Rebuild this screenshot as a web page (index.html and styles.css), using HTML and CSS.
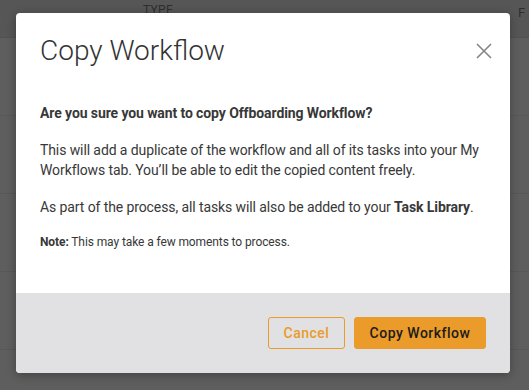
FILE: index.html
```html
<!DOCTYPE html>
<html>
<head>
<meta charset="utf-8">
<link rel="stylesheet" href="styles.css">
</head>
<body>
<div class="page">
  <div class="page-head">
    <span class="col-type">TYPE</span>
    <span class="col-f">F</span>
  </div>
  <div class="row"></div>
  <div class="row"></div>
  <div class="row"></div>
  <div class="row"></div>
  <div class="row last"><span class="row-text">Engagement</span></div>
</div>

<div class="modal">
  <div class="modal-head">
    <h1 class="modal-title">Copy Workflow</h1>
    <button class="close" aria-label="Close">
      <svg width="18" height="18" viewBox="0 0 18 18"><path d="M2 2 L16 16 M16 2 L2 16" stroke="#858585" stroke-width="1.6" fill="none"/></svg>
    </button>
  </div>
  <div class="modal-body">
    <p class="question">Are you sure you want to copy Offboarding Workflow?</p>
    <p class="text">This will add a duplicate of the workflow and all of its tasks into your My Workflows tab. You’ll be able to edit the copied content freely.</p>
    <p class="text">As part of the process, all tasks will also be added to your <b>Task Library</b>.</p>
    <p class="note"><b>Note:</b> This may take a few moments to process.</p>
  </div>
  <div class="modal-foot">
    <button class="btn btn-outline">Cancel</button>
    <button class="btn btn-primary">Copy Workflow</button>
  </div>
</div>
</body>
</html>
```
FILE: styles.css
```css
html, body {
  margin: 0;
  padding: 0;
}
body {
  width: 529px;
  height: 390px;
  overflow: hidden;
  background: #5e5e5e;
  font-family: Roboto, "Liberation Sans", sans-serif;
  position: relative;
}
.page {
  display: flex;
  flex-direction: column;
  height: 390px;
  overflow: hidden;
}
.page-head {
  height: 37px;
  flex: none;
  background: #565656;
  border-bottom: 1px solid #515151;
  position: relative;
  font-size: 12px;
  color: #2e2e2e;
}
.col-type {
  position: absolute;
  left: 143px;
  top: 3px;
  letter-spacing: 0.3px;
}
.col-f {
  position: absolute;
  left: 518px;
  top: 5px;
  font-size: 13px;
}
.row {
  height: 77px;
  flex: none;
  border-bottom: 1px solid #575757;
  position: relative;
}
.row.last {
  border-bottom: none;
  height: 38px;
  overflow: hidden;
}
.row-text {
  position: absolute;
  left: 157px;
  top: 35px;
  font-size: 15px;
  color: #262626;
}
.modal {
  position: absolute;
  left: 16px;
  top: 13px;
  width: 494px;
  height: 360px;
  background: #fff;
  border-radius: 4px;
  box-shadow: 0 2px 10px rgba(0,0,0,0.3);
  display: flex;
  flex-direction: column;
  overflow: hidden;
}
.modal-head {
  display: flex;
  align-items: center;
  justify-content: space-between;
  padding: 21px 17px 0 24px;
}
.modal-title {
  margin: 0;
  font-size: 28px;
  line-height: 34px;
  font-weight: 300;
  color: #333;
}
.close {
  border: none;
  background: none;
  padding: 0;
  width: 18px;
  height: 18px;
  display: flex;
}
.modal-body {
  flex: 1;
  padding: 35px 24px 0 24px;
  color: #383838;
  letter-spacing: -0.1px;
}
.modal-body p {
  margin: 0 0 17px 0;
}
.question {
  font-size: 14px;
  font-weight: 700;
  line-height: 20px;
}
.text {
  font-size: 14px;
  line-height: 20px;
}
.text b {
  font-weight: 700;
}
.note {
  font-size: 12px;
  line-height: 16px;
}
.modal-foot {
  height: 80px;
  flex: none;
  background: #e1e1e3;
  display: flex;
  align-items: center;
  justify-content: flex-end;
  gap: 9px;
  padding: 0 24px;
  box-sizing: border-box;
}
.btn {
  height: 32px;
  border-radius: 3px;
  font-family: Roboto, "Liberation Sans", sans-serif;
  font-size: 14px;
  font-weight: 500;
  letter-spacing: 0.5px;
  padding: 0;
  white-space: nowrap;
  cursor: pointer;
}
.btn-outline {
  width: 77px;
  background: transparent;
  border: 1px solid #ea9b29;
  color: #ea9b29;
}
.btn-primary {
  width: 132px;
  background: #ea9b29;
  border: 1px solid #ea9b29;
  color: #1c1c1c;
}
```
